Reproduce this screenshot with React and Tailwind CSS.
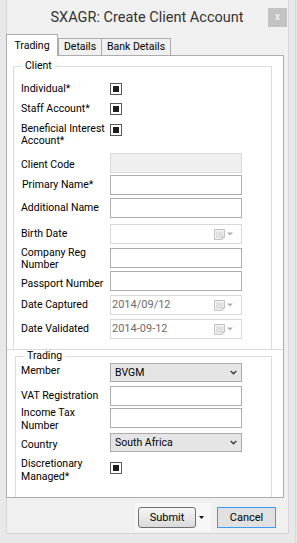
import React from 'react';

function Check() {
  return (
    <div className="w-[12px] h-[12px] shrink-0 border border-[#5a5a5a] bg-white flex items-center justify-center">
      <div className="w-[6px] h-[6px] bg-[#1e1e1e]" />
    </div>
  );
}

function TextBox({ disabled }) {
  return (
    <div
      className={
        disabled
          ? 'w-[132px] h-[20px] shrink-0 border border-[#d9d9d9] bg-[#efefef]'
          : 'w-[132px] h-[20px] shrink-0 border border-[#abadb3] bg-white'
      }
    />
  );
}

function CalendarIcon() {
  return (
    <svg width="11" height="11" viewBox="0 0 11 11" className="shrink-0">
      <path d="M0.5 0.5 H10.5 V8 L8 10.5 H0.5 Z" fill="#f3f3f3" stroke="#c2c2c2" />
      <path d="M3 2.5 V9 M5.5 2.5 V9 M8 2.5 V8 M2 4 H9.5 M2 6 H9.5 M2 8 H8" stroke="#d2d2d2" strokeWidth="0.8" />
      <path d="M8 10.5 V8 H10.5" fill="#e2e2e2" stroke="#c2c2c2" />
    </svg>
  );
}

function DateBox({ value }) {
  return (
    <div className="w-[132px] h-[20px] shrink-0 border border-[#d9d9d9] bg-white flex items-center pl-[1px] pr-[8px]">
      <span className="flex-1 text-[11px] leading-[12px] text-[#6d6d6d]">{value}</span>
      <CalendarIcon />
      <svg width="6" height="4" viewBox="0 0 6 4" className="ml-[2px] shrink-0">
        <path d="M0 0.5 H6 L3 3.5 Z" fill="#b0b0b0" />
      </svg>
    </div>
  );
}

function Combo({ value }) {
  return (
    <div className="w-[132px] h-[19px] shrink-0 border border-[#acacac] bg-[#e5e5e5] flex items-center pl-[4px] pr-[4px]">
      <span className="flex-1 leading-[12px] text-black">{value}</span>
      <svg width="7" height="5" viewBox="0 0 7 5" className="shrink-0">
        <path d="M0.7 1 L3.5 3.8 L6.3 1" stroke="#3c3c3c" strokeWidth="1.4" fill="none" />
      </svg>
    </div>
  );
}

function Row({ label, className, labelClass, children }) {
  return (
    <div className={'flex ' + (className || '')}>
      <div className={'w-[89px] shrink-0 ' + (labelClass || 'leading-[12px]')}>{label}</div>
      {children}
    </div>
  );
}

export default function App() {
  return (
    <div className="w-[297px] h-[543px] flex bg-[#e8e8e8] text-[10.5px] text-black font-['Roboto',sans-serif] overflow-hidden">
      <div className="w-[6px] shrink-0" />

      {/* window body */}
      <div className="w-[283px] h-[534px] shrink-0 flex flex-col bg-[#f0f0f0] border-l border-r border-b border-[#d6d6d6]">
        {/* title bar */}
        <div className="mt-[8px] h-[19px] grid grid-cols-[19px_1fr_19px] items-center pr-[1px]">
          <div />
          <div className="text-center text-[14.5px] leading-[19px] text-[#333]">SXAGR: Create Client Account</div>
          <div className="w-[19px] h-[19px] bg-[#c2c2c2] text-white text-[10px] leading-[17px] text-center">x</div>
        </div>

        {/* tabs */}
        <div className="mt-[7px] h-[21px] flex items-end">
          <div className="-ml-px w-[52px] h-[22px] -mb-px relative z-10 bg-white border-l border-t border-r border-[#acacac] flex items-center justify-center text-[10.5px] leading-[12px]">
            Trading
          </div>
          <div className="w-[44px] h-[17px] border-l border-t border-r border-[#acacac] bg-[#f0f0f0] flex items-center justify-center leading-[12px]">
            Details
          </div>
          <div className="w-[69px] h-[17px] border-t border-r border-[#acacac] bg-[#f0f0f0] flex items-center justify-center leading-[12px]">
            Bank Details
          </div>
        </div>

        {/* tab page */}
        <div className="-ml-px w-[278px] h-[443px] shrink-0 bg-white border border-[#acacac] flex flex-col">
          {/* client panel */}
          <div className="h-[294px] shrink-0 border-b border-[#dadada] overflow-hidden">
            <div className="relative mt-[10px] ml-[6px] w-[259px] h-[300px] border border-[#dcdcdc]">
              <span className="absolute -top-[7px] left-[8px] bg-white px-[3px] leading-[12px]">Client</span>
              <div className="flex flex-col pl-[7px]">
                <Row label="Individual*" className="mt-[16px] h-[12px] items-center">
                  <Check />
                </Row>
                <Row label="Staff Account*" className="mt-[8px] h-[12px] items-center">
                  <Check />
                </Row>
                <Row label="Beneficial Interest Account*" className="mt-[9px] items-start" labelClass="leading-[12px] -mt-px">
                  <Check />
                </Row>
                <Row label="Client Code" className="mt-[6px] h-[20px] items-center" labelClass="leading-[12px] pt-[3px]">
                  <TextBox disabled />
                </Row>
                <Row label="Primary Name*" className="mt-[2px] h-[20px] items-center" labelClass="leading-[12px] pl-px">
                  <TextBox />
                </Row>
                <Row label="Additional Name" className="mt-[3px] h-[20px] items-center">
                  <TextBox />
                </Row>
                <Row label="Birth Date" className="mt-[6px] h-[20px] items-center">
                  <DateBox value="" />
                </Row>
                <Row label="Company Reg Number" className="mt-[4px] h-[20px] items-center" labelClass="leading-[12px] pt-[2px]">
                  <TextBox />
                </Row>
                <Row label="Passport Number" className="mt-[3px] h-[20px] items-center" labelClass="leading-[12px] pt-[6px]">
                  <TextBox />
                </Row>
                <Row label="Date Captured" className="mt-[4px] h-[20px] items-center">
                  <DateBox value="2014/09/12" />
                </Row>
                <Row label="Date Validated" className="mt-[4px] h-[20px] items-center">
                  <DateBox value="2014-09-12" />
                </Row>
              </div>
            </div>
          </div>

          {/* trading panel */}
          <div className="h-[147px] shrink-0 overflow-hidden">
            <div className="relative mt-[6px] ml-[8px] w-[257px] h-[150px] border border-[#dcdcdc]">
              <span className="absolute -top-[7px] left-[8px] bg-white px-[3px] leading-[12px]">Trading</span>
              <div className="flex flex-col pl-[5px]">
                <Row label="Member" className="mt-[6px] h-[19px] items-center" labelClass="leading-[12px] pb-[3px]">
                  <Combo value="BVGM" />
                </Row>
                <Row label="VAT Registration" className="mt-[4px] h-[19px] items-center">
                  <TextBox />
                </Row>
                <Row label="Income Tax Number" className="mt-[3px] h-[19px] items-center" labelClass="leading-[13px] pt-[3px]">
                  <TextBox />
                </Row>
                <Row label="Country" className="mt-[6px] h-[19px] items-center" labelClass="leading-[12px] pt-[5px]">
                  <Combo value="South Africa" />
                </Row>
                <Row label="Discretionary Managed*" className="mt-[10px] h-[12px] items-center" labelClass="leading-[13px] pt-[3px]">
                  <Check />
                </Row>
              </div>
            </div>
          </div>
        </div>

        {/* buttons */}
        <div className="mt-[5px] flex justify-end items-start pr-[12px] gap-[6px]">
          <div className="w-[76px] h-[28px] bg-[#f7f7f7] flex items-start pl-[3px] pt-[4px]">
            <div className="w-[58px] h-[21px] rounded-[3px] border border-[#707070] bg-gradient-to-b from-[#f6f6f6] to-[#dadada] flex items-center justify-center text-[11px] leading-[12px]">
              Submit
            </div>
            <svg width="5" height="3" viewBox="0 0 5 3" className="ml-[3px] mt-[9px]">
              <path d="M0 0 H5 L2.5 3 Z" fill="#111" />
            </svg>
          </div>
          <div className="mt-[4px] w-[59px] h-[21px] border border-[#3c9cf5] bg-[#e1e1e1] flex items-center justify-center text-[11px] leading-[12px]">
            Cancel
          </div>
        </div>
      </div>

      <div className="w-[7px] shrink-0 h-[543px] border-r border-[#dadada]" />
    </div>
  );
}
